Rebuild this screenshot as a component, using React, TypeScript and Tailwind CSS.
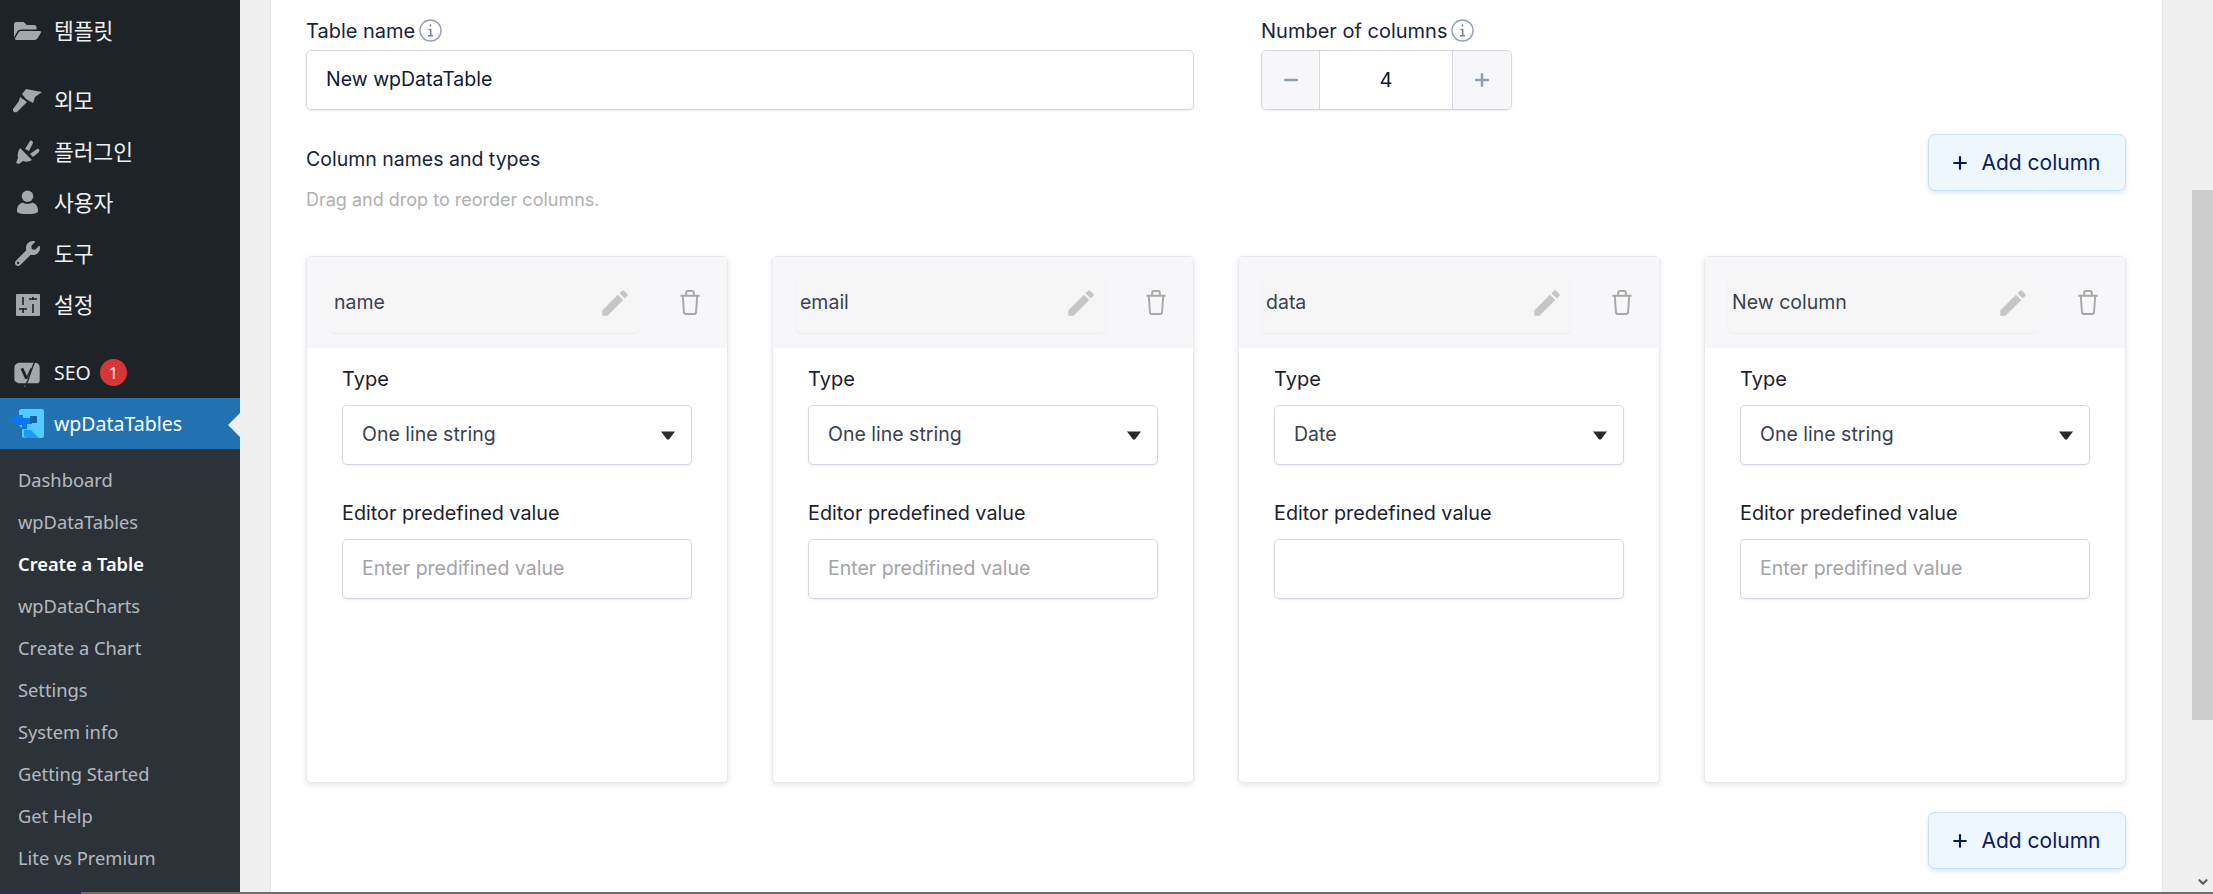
import React from 'react'
import { FaFolderOpen, FaWrench } from 'react-icons/fa'
import { MdEdit } from 'react-icons/md'
import { ChevronDown, Minus, Plus } from 'lucide-react'

const BrushIcon = () => (
  <svg viewBox="0 0 29 24" className="h-[24px] w-[29px]" fill="#a3a8ad">
    <path d="M13 0l16 3-7 5-2 6-7-4-4-5z" />
    <path d="M7 8l7 5-3 3-7 7c-2 1-5-1-4-3l6-8z" />
  </svg>
)

const PluginIcon = () => (
  <svg viewBox="0 0 24 24" className="h-[24px] w-[24px]" fill="#a3a8ad">
    <path d="M4 8l12 12c-3 2-6 2-9 1l-4 3-3-1 2-5C1 15 2 11 4 8z" />
    <path d="M9 9l5-8c1-1 3 0 3 2l-4 8zM14 14l7-5c2-1 3 1 2 3l-6 5z" />
  </svg>
)

const UserIcon = () => (
  <svg viewBox="0 0 24 26" className="h-[25px] w-[23px]" fill="#a3a8ad">
    <circle cx="12" cy="6.5" r="6" />
    <path d="M1 22c0-6 3-8 6-9 3 2 7 2 10 0 3 1 6 3 6 9 0 2-5 3-11 3S1 24 1 22z" />
  </svg>
)

const SettingsIcon = () => (
  <svg viewBox="0 0 24 22" className="h-[22px] w-[24px]">
    <rect x="0" y="0" width="24" height="22" rx="1" fill="#a3a8ad" />
    <path d="M7 3v8M17 10v9M3 15h8M13 5h8" stroke="#1d2327" strokeWidth="1.6" fill="none" />
    <path d="M7 14v5M17 3v3" stroke="#1d2327" strokeWidth="1.6" fill="none" />
  </svg>
)

const YoastIcon = () => (
  <svg viewBox="0 0 28 32" className="h-[30px] w-[27px]">
    <path d="M6 5h16c3 0 5 2 5 5v14c0 2-1 3-3 3H6c-3 0-6-2-6-4V10c0-3 3-5 6-5z" fill="#a3a8ad" />
    <path d="M23 0l-7 19c-1 4-2 7-4 9l-4 3h3" stroke="#1d2327" strokeWidth="1.4" fill="#a3a8ad" />
    <path d="M8 11l5 11" stroke="#1d2327" strokeWidth="3" fill="none" />
    <path d="M18 11l-5 11" stroke="#1d2327" strokeWidth="1.6" fill="none" />
  </svg>
)

const DataTablesLogo = () => (
  <svg viewBox="0 0 35 29" className="h-[29px] w-[35px]">
    <path d="M10 2c0-1 1-2 2-2h21c1 0 2 1 2 2v25c0 1-1 2-2 2H15c-1 0-2-1-2-2v-8l-3-3z" fill="#52cbff" />
    <path d="M0 8h7V6h7v3h9v6h-5v5h-5v-4H7v-3H0z" fill="#0a76f2" />
    <path d="M21 7h7v7h-7z" fill="#1b5f9f" />
    <path d="M15 21h7l8 8H17c-1 0-2-1-2-2z" fill="#1e9bf5" />
  </svg>
)

const InfoIcon = () => (
  <svg viewBox="0 0 23 23" className="h-[23px] w-[23px]" fill="none">
    <circle cx="11.5" cy="11.5" r="10.5" stroke="#8ea2bf" strokeWidth="1.4" />
    <path d="M11.5 5.500v2M9.500 10.500h2.200v6M9 16.800h5" stroke="#6f8098" strokeWidth="1.5" />
  </svg>
)

const TrashIcon = () => (
  <svg viewBox="0 0 22 26" className="h-[25px] w-[22px]" fill="none" stroke="#a8a8a8" strokeWidth="2">
    <path d="M1 6h20M7 6V3c0-1 1-2 2-2h4c1 0 2 1 2 2v3" />
    <path d="M3.500 6l1.200 17c0 1 1 2 2 2h8.600c1 0 2-1 2-2L18.500 6" />
  </svg>
)

const AddButton = () => (
  <button className="flex h-[57px] w-[198px] shrink-0 items-center justify-center gap-[11px] rounded-[7px] border border-[#c5e2fd] bg-[#eef6fe] pr-[3px] text-[21px] text-[#0b1a5c] shadow-[0_2px_4px_rgba(100,160,230,0.25)]">
    <Plus className="h-[20px] w-[20px]" strokeWidth={2.6} />
    Add column
  </button>
)

const topItems: { label: string; icon: React.ReactNode; className?: string }[] = [
  { label: '템플릿', icon: <FaFolderOpen className="h-[26px] w-[27px] text-[#a3a8ad]" />, className: 'mb-[19px]' },
  { label: '외모', icon: <BrushIcon /> },
  { label: '플러그인', icon: <PluginIcon /> },
  { label: '사용자', icon: <UserIcon /> },
  { label: '도구', icon: <FaWrench className="h-[25px] w-[25px] text-[#a3a8ad]" /> },
  { label: '설정', icon: <SettingsIcon />, className: 'mb-[17px]' },
]

const subItems = [
  'Dashboard',
  'wpDataTables',
  'Create a Table',
  'wpDataCharts',
  'Create a Chart',
  'Settings',
  'System info',
  'Getting Started',
  'Get Help',
  'Lite vs Premium',
]

const columns = [
  { name: 'name', type: 'One line string', placeholder: 'Enter predifined value' },
  { name: 'email', type: 'One line string', placeholder: 'Enter predifined value' },
  { name: 'data', type: 'Date', placeholder: '' },
  { name: 'New column', type: 'One line string', placeholder: 'Enter predifined value' },
]

const Sidebar = () => (
  <aside className="flex w-[240px] shrink-0 flex-col bg-[#1d2327] pt-[5px] font-['Noto_Sans','Noto_Sans_CJK_KR',sans-serif] text-[19.500px] text-[#f0f0f1]">
    {topItems.map(item => (
      <div key={item.label} className={`flex h-[51px] items-center ${item.className ?? ''}`}>
        <div className="flex w-[54px] justify-center pl-[1px]">{item.icon}</div>
        <span className="font-['Noto_Sans_CJK_KR',sans-serif] text-[21.500px]">{item.label}</span>
      </div>
    ))}
    <div className="flex h-[51px] items-center">
      <div className="flex w-[54px] justify-center">
        <YoastIcon />
      </div>
      <span>SEO</span>
      <span className="ml-[9px] flex h-[27px] w-[27px] items-center justify-center rounded-full bg-[#d63638] text-[17px] leading-none text-white">
        1
      </span>
    </div>
    <div className="relative flex h-[51px] items-center bg-[#2271b1] text-white">
      <div className="flex w-[54px] justify-start pl-[9px]">
        <DataTablesLogo />
      </div>
      <span>wpDataTables</span>
      <span className="absolute right-0 top-[15px] h-0 w-0 border-y-[12px] border-r-[12px] border-y-transparent border-r-[#f0f0f1]" />
    </div>
    <div className="flex flex-1 flex-col bg-[#2c3338] pt-[10px] text-[18.300px] text-[#f0f6fcb3]">
      {subItems.map(item => (
        <div
          key={item}
          className={`flex h-[42px] shrink-0 items-center pl-[18px] ${item === 'Create a Table' ? 'font-semibold text-white' : ''}`}
        >
          {item}
        </div>
      ))}
    </div>
  </aside>
)

const ColumnCard = ({ name, type, placeholder }: { name: string; type: string; placeholder: string }) => (
  <div className="flex h-[527px] w-[422px] flex-col rounded-[5px] border border-[#e9e9ef] bg-white shadow-[0_2px_5px_rgba(70,80,120,0.14)]">
    <div className="flex h-[91px] shrink-0 items-center bg-[#f7f7f9] pl-[23px] pr-[26px]">
      <div className="flex h-[60px] flex-1 items-center justify-between rounded-[5px] bg-[#f6f6f6] pl-[4px] pr-[7px] text-[19.500px] text-[#3a4150] shadow-[0_1px_2px_rgba(0,0,0,0.05)]">
        {name}
        <MdEdit className="h-[34px] w-[34px] text-[#c6c6c6]" />
      </div>
      <div className="ml-[40px]">
        <TrashIcon />
      </div>
    </div>
    <div className="flex flex-col px-[35px] pt-[18px]">
      <label className="text-[20px] leading-[26px] text-[#1c2130]">Type</label>
      <div className="mt-[13px] flex h-[60px] items-center justify-between rounded-[5px] border border-[#d5d6e2] pl-[19px] pr-[16px] text-[19.500px] text-[#3a4150] shadow-[0_1px_2px_rgba(70,80,120,0.1)]">
        {type}
        <svg viewBox="0 0 14 9" className="h-[9px] w-[14px]" fill="#2b2b2b">
          <path d="M0 0.500h14L8 8.500H6z" />
        </svg>
      </div>
      <label className="mt-[35px] text-[19.800px] leading-[26px] text-[#1c2130]">Editor predefined value</label>
      <div className="mt-[13px] flex h-[60px] items-center rounded-[5px] border border-[#d5d6e2] pl-[19px] text-[19.500px] text-[#a3a3a8] shadow-[0_1px_2px_rgba(70,80,120,0.1)]">
        {placeholder}
      </div>
    </div>
  </div>
)

const App: React.FC = () => {
  return (
    <div className="flex h-[894px] w-[2213px] flex-col overflow-hidden bg-[#f0f0f1] font-['Inter',sans-serif]">
      <div className="flex min-h-0 flex-1">
        <Sidebar />
        <div className="flex flex-1 pl-[30px]">
          <main className="flex w-[1893px] flex-col border-x border-[#e6e6e8] bg-white pl-[35px] pr-[36px]">
            <div className="flex pt-[14px]">
              <div className="w-[955px]">
                <div className="mb-[3px] flex h-[33px] items-center gap-[4px] text-[20px] text-[#17233d]">
                  Table name <InfoIcon />
                </div>
                <div className="flex h-[60px] w-[888px] items-center rounded-[5px] border border-[#d5d6e2] pl-[19px] text-[19.500px] text-[#0e1a38] shadow-[0_1px_2px_rgba(70,80,120,0.1)]">
                  New wpDataTable
                </div>
              </div>
              <div>
                <div className="mb-[3px] flex h-[33px] items-center gap-[4px] text-[20px] text-[#17233d]">
                  Number of columns <InfoIcon />
                </div>
                <div className="flex h-[60px] w-[251px] overflow-hidden rounded-[5px] border border-[#d5d6e2] text-[#0e1a38] shadow-[0_1px_2px_rgba(70,80,120,0.1)]">
                  <div className="flex w-[58px] items-center justify-center border-r border-[#d5d6e2] bg-[#f7f7fa]">
                    <Minus className="h-[20px] w-[20px] text-[#8f9db5]" strokeWidth={3} />
                  </div>
                  <div className="flex flex-1 items-center justify-center text-[20px]">4</div>
                  <div className="flex w-[59px] items-center justify-center border-l border-[#d5d6e2] bg-[#f7f7fa]">
                    <Plus className="h-[20px] w-[20px] text-[#8f9db5]" strokeWidth={3} />
                  </div>
                </div>
              </div>
            </div>
            <div className="mt-[24px] flex items-start justify-between">
              <div>
                <div className="mt-[10px] text-[19.500px] leading-[30px] text-[#17233d]">Column names and types</div>
                <div className="mt-[13px] text-[18px] leading-[26px] text-[#b0b0b0]">Drag and drop to reorder columns.</div>
              </div>
              <AddButton />
            </div>
            <div className="mt-[43px] flex justify-between">
              {columns.map(col => (
                <ColumnCard key={col.name} {...col} />
              ))}
            </div>
            <div className="mt-[29px] flex justify-end">
              <AddButton />
            </div>
          </main>
          <div className="flex-1" />
          <div className="flex w-[21px] flex-col pt-[190px]">
            <div className="h-[530px] bg-[#cdcdcd]" />
            <div className="flex flex-1 items-end justify-center pb-[3px]">
              <ChevronDown className="h-[14px] w-[14px] text-[#606060]" strokeWidth={4} />
            </div>
          </div>
        </div>
      </div>
      <div className="flex h-[2px] shrink-0 bg-[#6e6e6e]">
        <div className="w-[81px] bg-[#2a2f55]" />
      </div>
    </div>
  )
}

export default App
